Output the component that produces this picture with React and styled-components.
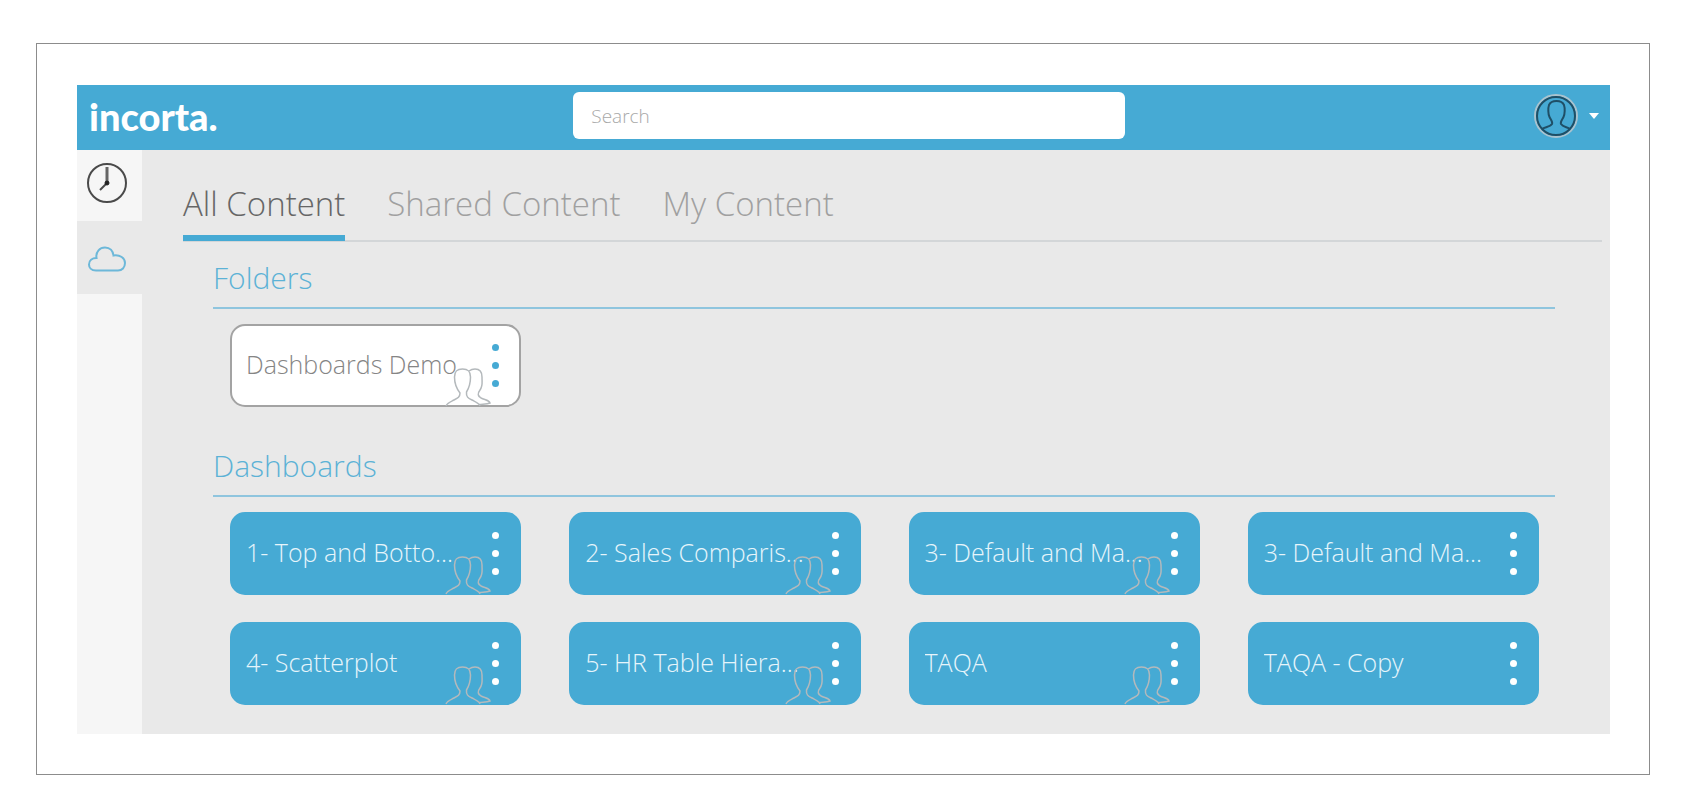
import React from "react";
import styled, { createGlobalStyle, css } from "styled-components";

const blue = "#46aad4";

const GlobalStyle = createGlobalStyle`
  *, *::before, *::after { box-sizing: border-box; }
  body {
    margin: 0;
    background: #fff;
    font-family: "Open Sans", "Noto Sans", sans-serif;
    font-weight: 300;
  }
  button, input { font: inherit; }
`;

const Frame = styled.div`
  margin: 43px 36px 34px;
  padding: 41px 39px 40px 40px;
  border: 1px solid #8c8c8c;
`;

const Shell = styled.div`
  background: #e9e9e9;
`;

const Header = styled.header`
  display: grid;
  grid-template-columns: 45fr 50fr 44fr;
  align-items: center;
  height: 65px;
  padding-bottom: 4px;
  background: ${blue};
`;

const Logo = styled.a`
  padding-left: 12px;
  color: #fff;
  font-family: Lato, sans-serif;
  font-size: 38px;
  font-weight: 900;
  line-height: 40px;
  text-decoration: none;
`;

const SearchInput = styled.input`
  width: 100%;
  height: 47px;
  padding: 0 18px;
  border: 0;
  border-radius: 6px;
  background: #fff;
  color: #666;
  font-size: 19px;
  &::placeholder { color: #a8a8a8; opacity: 1; }
`;

const Account = styled.button`
  display: flex;
  align-items: center;
  justify-self: end;
  gap: 11px;
  padding: 0 11px 0 0;
  border: 0;
  background: none;
`;

const Body = styled.div`
  display: grid;
  grid-template-columns: 65px minmax(0, 1fr);
`;

const Sidebar = styled.nav`
  background: #f6f6f6;
`;

const SideItem = styled.button`
  display: flex;
  justify-content: center;
  width: 100%;
  height: ${(p) => (p.$active ? 73 : 71)}px;
  padding: ${(p) => (p.$active ? 24 : 12)}px 6px 0 0;
  border: 0;
  background: ${(p) => (p.$active ? "#e9e9e9" : "#f6f6f6")};
`;

const Main = styled.main`
  padding: 19px 8px 29px 41px;
`;

const Tabs = styled.div`
  display: flex;
  gap: 42px;
  border-bottom: 2px solid #d3d6d8;
`;

const Tab = styled.button`
  height: 72px;
  margin-bottom: -1px;
  padding: 4px 0 0;
  border: 0;
  border-bottom: 6px solid ${(p) => (p.$active ? blue : "transparent")};
  background: none;
  color: ${(p) => (p.$active ? "#666" : "#a0a0a0")};
  font-size: 33px;
  line-height: 44px;
  white-space: nowrap;
`;

const Section = styled.section`
  margin: 0 47px 0 30px;
  & + & { margin-top: 23px; }
`;

const SectionTitle = styled.h2`
  margin: 0;
  padding: 16px 0 9px;
  border-bottom: 2px solid #8fc5de;
  color: #5cb2d6;
  font-size: 30px;
  font-weight: 300;
  line-height: 40px;
`;

const CardGrid = styled.div`
  display: grid;
  grid-template-columns: repeat(4, minmax(0, 1fr));
  gap: 27px 48px;
  padding: 15px 16px 0 17px;
`;

const folderStyle = css`
  border: 2px solid #a3a3a3;
  background: #fff;
  color: #858585;
`;

const Card = styled.article`
  position: relative;
  display: flex;
  align-items: center;
  height: 83px;
  padding: 0 20px 0 14px;
  border: 2px solid ${blue};
  border-radius: 15px;
  background: ${blue};
  color: #e6f5fb;
  ${(p) => p.$folder && folderStyle}
`;

const CardTitle = styled.a`
  width: 228px;
  padding-bottom: 3px;
  overflow: hidden;
  color: inherit;
  font-size: 25px;
  line-height: 32px;
  text-decoration: none;
  text-overflow: ellipsis;
  white-space: nowrap;
`;

const MenuButton = styled.button`
  display: grid;
  gap: 11px;
  margin-left: auto;
  padding: 0;
  border: 0;
  background: none;
`;

const Dot = styled.span`
  width: 7px;
  height: 7px;
  border-radius: 50%;
  background: ${(p) => (p.$folder ? blue : "#fff")};
`;

const SharedBadge = styled.svg`
  position: absolute;
  right: 28px;
  bottom: -2px;
`;

function Clock() {
  return (
    <svg width="42" height="42" viewBox="0 0 42 42" fill="none" stroke="#4a4a4a">
      <circle cx="21" cy="21" r="19" strokeWidth="2" />
      <path d="M21 5V21" strokeWidth="3" stroke="#666" />
      <path d="M21 21L14 28" strokeWidth="2" />
      <circle cx="21" cy="21" r="2" fill="#222" stroke="#222" />
    </svg>
  );
}

function Cloud() {
  return (
    <svg width="40" height="28" viewBox="0 0 40 28" fill="none" stroke="#6db8d9" strokeWidth="2">
      <path d="M9 25.500C4 25.500 2 22.500 2 19.500C2 15.500 5 13 9.500 13C8.500 6.500 13 2.500 18 2.500C23 2.500 26 6 26.500 10.500C33 9.500 38 13 38 18C38 22.500 35 25.500 31 25.500Z" />
    </svg>
  );
}

function Avatar() {
  return (
    <svg width="44" height="44" viewBox="0 0 44 44" fill="none">
      <circle cx="22" cy="22" r="21" stroke="#a9c3cf" strokeWidth="2" />
      <circle cx="22" cy="22" r="19" stroke="#1f4f66" strokeWidth="2" />
      <path
        d="M8 35C11 33 16 33 18 30C19 28 17 26 15.500 23C14 20 14 14 15 11C16.500 7.500 19 7 22.500 7C26 7 28.500 7.500 30 11C31 14 31 20 29.500 23C28 26 26 28 27 30C29 33 33 33 36 35"
        stroke="#1f4f66"
        strokeWidth="2"
      />
    </svg>
  );
}

function Caret() {
  return (
    <svg width="10" height="6" viewBox="0 0 10 6" fill="#fff">
      <path d="M0 0H10L5 6Z" />
    </svg>
  );
}

function People() {
  return (
    <SharedBadge width="46" height="40" viewBox="0 0 46 40" fill="none" stroke="#b4b9bc" strokeWidth="1.500" aria-hidden="true">
      <path d="M1 39C2 36 5 35 9 33C13 31 15 30 15 26C11 21 9.500 17 9.500 10C9.500 4 12 2 17.500 2C23 2 25.500 4 25.500 10C25.500 17 24 21 21.500 25C21 30 23 31 27 33C31 35 34 36 35 39" />
      <path d="M24 4C26 2.500 28 2 30 2C35.500 2 37 5 37 10C37 17 38 19 35 23C32 27 33 29 36 31C40 33 44 33 45 36C42 37.500 38 37 34 37.500" />
    </SharedBadge>
  );
}

function ContentCard({ title, shared, folder }) {
  return (
    <Card $folder={folder}>
      <CardTitle href="#">{title}</CardTitle>
      {shared && <People />}
      <MenuButton type="button" aria-label={`Options for ${title}`}>
        <Dot $folder={folder} />
        <Dot $folder={folder} />
        <Dot $folder={folder} />
      </MenuButton>
    </Card>
  );
}

const dashboards = [
  { id: 1, title: "1- Top and Botto...", shared: true },
  { id: 2, title: "2- Sales Comparis...", shared: true },
  { id: 3, title: "3- Default and Ma...", shared: true },
  { id: 4, title: "3- Default and Ma...", shared: false },
  { id: 5, title: "4- Scatterplot", shared: true },
  { id: 6, title: "5- HR Table Hiera...", shared: true },
  { id: 7, title: "TAQA", shared: true },
  { id: 8, title: "TAQA - Copy", shared: false },
];

export default function App() {
  return (
    <>
      <GlobalStyle />
      <Frame>
        <Shell>
          <Header>
            <Logo href="#">incorta.</Logo>
            <SearchInput type="search" placeholder="Search" aria-label="Search" />
            <Account type="button" aria-label="Account menu">
              <Avatar />
              <Caret />
            </Account>
          </Header>
          <Body>
            <Sidebar>
              <SideItem type="button" aria-label="Recent">
                <Clock />
              </SideItem>
              <SideItem type="button" aria-label="Content" $active>
                <Cloud />
              </SideItem>
            </Sidebar>
            <Main>
              <Tabs role="tablist">
                <Tab type="button" role="tab" aria-selected="true" $active>All Content</Tab>
                <Tab type="button" role="tab" aria-selected="false">Shared Content</Tab>
                <Tab type="button" role="tab" aria-selected="false">My Content</Tab>
              </Tabs>
              <Section>
                <SectionTitle>Folders</SectionTitle>
                <CardGrid>
                  <ContentCard title="Dashboards Demo" shared folder />
                </CardGrid>
              </Section>
              <Section>
                <SectionTitle>Dashboards</SectionTitle>
                <CardGrid>
                  {dashboards.map((d) => (
                    <ContentCard key={d.id} title={d.title} shared={d.shared} />
                  ))}
                </CardGrid>
              </Section>
            </Main>
          </Body>
        </Shell>
      </Frame>
    </>
  );
}
